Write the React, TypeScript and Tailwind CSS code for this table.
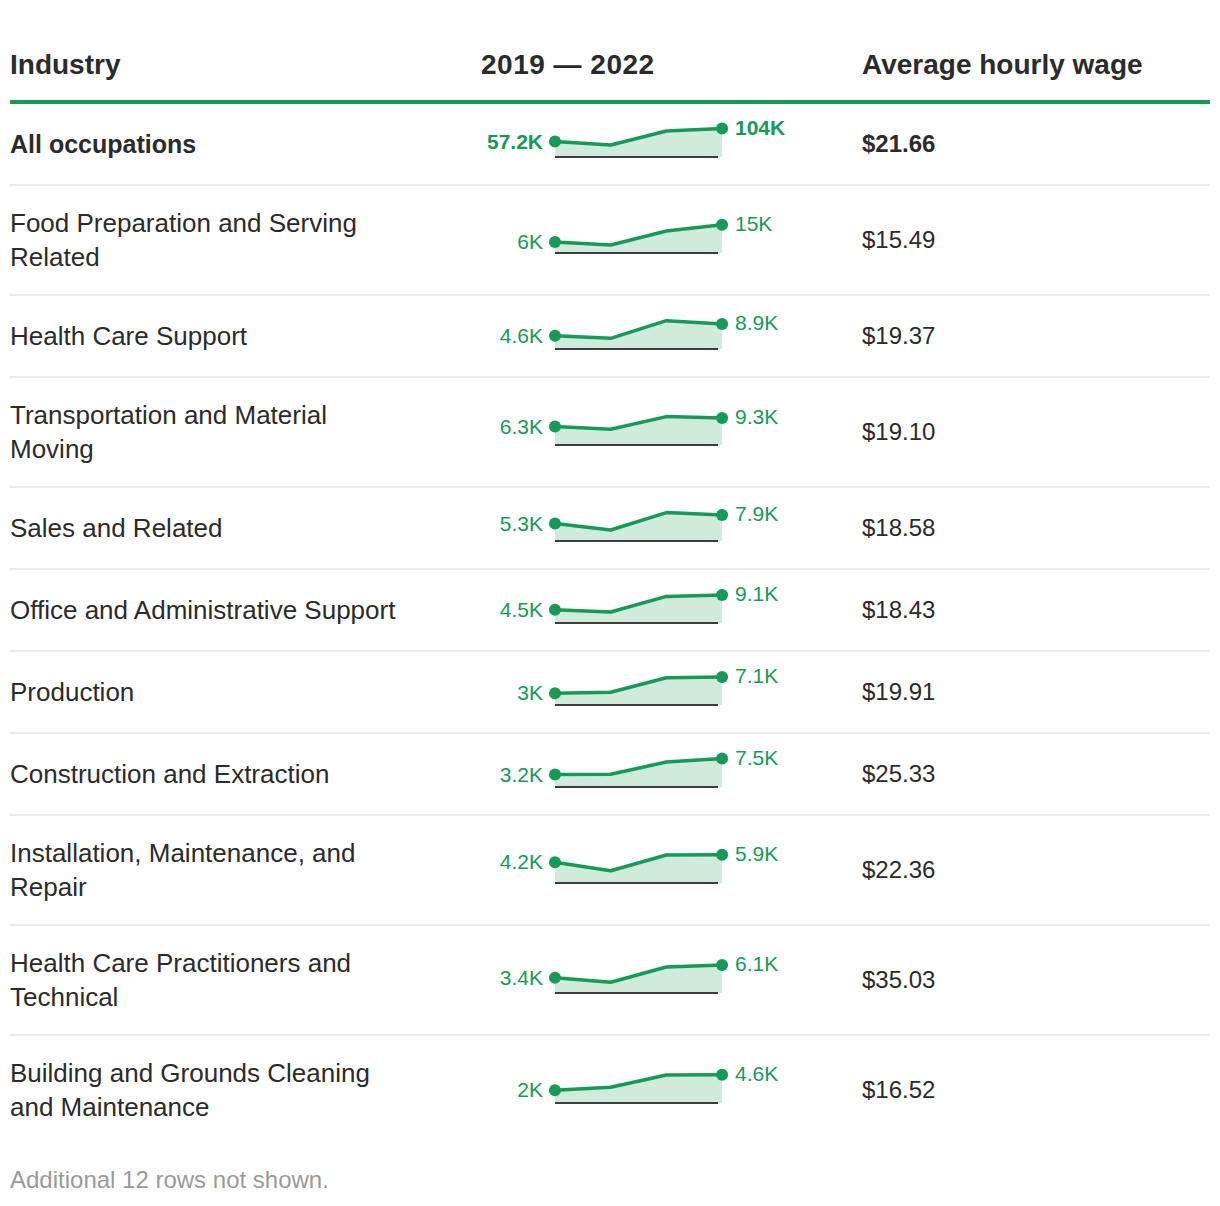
const GREEN = "#169a58"

type Row = {
  name: string[]
  start: string
  end: string
  // heights above baseline, px
  pts: number[]
  wage: string
  total?: boolean
}

const rows: Row[] = [
  { name: ["All occupations"], start: "57.2K", end: "104K", pts: [15.4, 12, 26, 28.4], wage: "$21.66", total: true },
  { name: ["Food Preparation and Serving", "Related"], start: "6K", end: "15K", pts: [11, 8, 22, 28.2], wage: "$15.49" },
  { name: ["Health Care Support"], start: "4.6K", end: "8.9K", pts: [13.3, 10.7, 28.3, 25], wage: "$19.37" },
  { name: ["Transportation and Material", "Moving"], start: "6.3K", end: "9.3K", pts: [18.4, 15.7, 28.4, 27], wage: "$19.10" },
  { name: ["Sales and Related"], start: "5.3K", end: "7.9K", pts: [17.4, 11, 28.4, 26], wage: "$18.58" },
  { name: ["Office and Administrative Support"], start: "4.5K", end: "9.1K", pts: [13.3, 11, 26.6, 28], wage: "$18.43" },
  { name: ["Production"], start: "3K", end: "7.1K", pts: [11.7, 12.7, 27.3, 28], wage: "$19.91" },
  { name: ["Construction and Extraction"], start: "3.2K", end: "7.5K", pts: [12.4, 12.7, 25, 28.4], wage: "$25.33" },
  { name: ["Installation, Maintenance, and", "Repair"], start: "4.2K", end: "5.9K", pts: [20.7, 12.3, 28, 28.3], wage: "$22.36" },
  { name: ["Health Care Practitioners and", "Technical"], start: "3.4K", end: "6.1K", pts: [15.3, 10.7, 26, 28], wage: "$35.03" },
  { name: ["Building and Grounds Cleaning", "and Maintenance"], start: "2K", end: "4.6K", pts: [12.7, 15.7, 28, 28.3], wage: "$16.52" },
]

const X0 = 75
const STEP = 55.7
const BASE = 33

function Sparkline({ row }: { row: Row }) {
  const xs = row.pts.map((_, i) => X0 + i * STEP)
  const ys = row.pts.map((h) => BASE - h)
  const line = xs.map((x, i) => `${i === 0 ? "M" : "L"}${x},${ys[i]}`).join(" ")
  const area = `${line} L${xs[3]},${BASE} L${xs[0]},${BASE} Z`
  const weight = row.total ? 700 : 400
  return (
    <svg width={382} height={40} className="block overflow-visible">
      <path d={area} fill="#d0eadb" />
      <line x1={X0} y1={BASE} x2={X0 + 163} y2={BASE} stroke="#3d3d3d" strokeWidth={2} />
      <path d={line} fill="none" stroke={GREEN} strokeWidth={3.5} strokeLinejoin="round" />
      <circle cx={xs[0]} cy={ys[0]} r={6} fill={GREEN} />
      <circle cx={xs[3]} cy={ys[3]} r={6} fill={GREEN} />
      <text
        x={X0 - 12}
        y={ys[0] - 0.5}
        textAnchor="end"
        dominantBaseline="central"
        fill={GREEN}
        fontSize={21}
        fontWeight={weight}
        fontFamily="'Liberation Sans', Arial, sans-serif"
      >
        {row.start}
      </text>
      <text
        x={X0 + 180}
        y={ys[3] - 1.5}
        dominantBaseline="central"
        fill={GREEN}
        fontSize={21}
        fontWeight={weight}
        fontFamily="'Liberation Sans', Arial, sans-serif"
      >
        {row.end}
      </text>
    </svg>
  )
}

export default function App() {
  return (
    <div className="min-h-[1206px] bg-white px-[10px] pt-[48px] text-[#2b2b2b] [font-family:'Liberation_Sans',Arial,sans-serif]">
      <div className="grid grid-cols-[470px_382px_1fr] border-b-4 border-[#169a58] pb-[18px] text-[28px] font-bold leading-[34px]">
        <div>Industry</div>
        <div className="pl-px tracking-[0.5px]">2019 — 2022</div>
        <div>Average hourly wage</div>
      </div>

      {rows.map((row, i) => (
        <div
          key={row.name.join(" ")}
          className={`grid grid-cols-[470px_382px_1fr] items-center py-5 ${
            i < rows.length - 1 ? "border-b-2 border-[#ececec]" : ""
          }`}
        >
          <div className={`min-h-[40px] flex flex-col justify-center leading-[34px] ${row.total ? "text-[25px] font-bold" : "text-[26px]"}`}>
            {row.name.map((l) => (
              <span key={l} className="whitespace-nowrap">
                {l}
              </span>
            ))}
          </div>
          <Sparkline row={row} />
          <div className={`text-[24px] leading-[34px] ${row.total ? "font-bold" : ""}`}>{row.wage}</div>
        </div>
      ))}

      <div className="pt-[22px] text-[24px] leading-[28px] text-[#9a9a9a]">Additional 12 rows not shown.</div>
    </div>
  )
}
